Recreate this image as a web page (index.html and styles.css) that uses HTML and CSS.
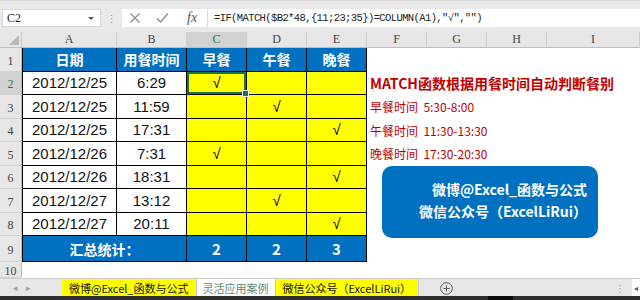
FILE: index.html
```html
<!DOCTYPE html>
<html lang="zh-CN">
<head>
  <meta charset="UTF-8">
  <meta name="viewport" content="width=device-width, initial-scale=1.0">
  <title>MATCH函数根据用餐时间自动判断餐别</title>
  <link rel="stylesheet" href="styles.css">
</head>
<body>
  <div class="app">
    <div class="formula-bar">
      <div class="name-box">C2<span class="arrow"></span></div>
      <div class="grip">⋮</div>
      <div class="formula-input">
        <div class="fx-buttons">
          <svg width="12" height="12" viewBox="0 0 12 12"><path d="M1.5 1.5 L10.5 10.5 M10.5 1.5 L1.5 10.5" stroke="#8a8a8a" stroke-width="1.2" fill="none"/></svg>
          <svg width="13" height="12" viewBox="0 0 13 12"><path d="M1 6.5 L4.5 10 L12 1.5" stroke="#8a8a8a" stroke-width="1.3" fill="none"/></svg>
          <span class="fx">fx</span>
        </div>
        <div class="formula-text">=IF(MATCH($B2*48,{11;23;35})=COLUMN(A1),"√","")</div>
      </div>
    </div>

    <div class="sheet">
      <div class="grid">
        <!-- column headers -->
        <div class="corner"><span class="corner-mark"></span></div>
        <div class="col-head">A</div>
        <div class="col-head">B</div>
        <div class="col-head selected">C</div>
        <div class="col-head">D</div>
        <div class="col-head">E</div>
        <div class="col-head">F</div>
        <div class="col-head">G</div>
        <div class="col-head">H</div>
        <div class="col-head">I</div>

        <!-- row 1 -->
        <div class="row-head">1</div>
        <div class="cell head first">日期</div>
        <div class="cell head">用餐时间</div>
        <div class="cell head">早餐</div>
        <div class="cell head">午餐</div>
        <div class="cell head">晚餐</div>
        <div class="rest"></div>

        <!-- row 2 -->
        <div class="row-head selected">2</div>
        <div class="cell first">2012/12/25</div>
        <div class="cell">6:29</div>
        <div class="cell mark active">√<span class="handle"></span></div>
        <div class="cell mark"></div>
        <div class="cell mark"></div>
        <div class="rest"><span class="note-title">MATCH函数根据用餐时间自动判断餐别</span></div>

        <!-- row 3 -->
        <div class="row-head">3</div>
        <div class="cell first">2012/12/25</div>
        <div class="cell">11:59</div>
        <div class="cell mark"></div>
        <div class="cell mark">√</div>
        <div class="cell mark"></div>
        <div class="rest"><span class="note">早餐时间  5:30-8:00</span></div>

        <!-- row 4 -->
        <div class="row-head">4</div>
        <div class="cell first">2012/12/25</div>
        <div class="cell">17:31</div>
        <div class="cell mark"></div>
        <div class="cell mark"></div>
        <div class="cell mark">√</div>
        <div class="rest"><span class="note">午餐时间  11:30-13:30</span></div>

        <!-- row 5 -->
        <div class="row-head">5</div>
        <div class="cell first">2012/12/26</div>
        <div class="cell">7:31</div>
        <div class="cell mark">√</div>
        <div class="cell mark"></div>
        <div class="cell mark"></div>
        <div class="rest"><span class="note">晚餐时间  17:30-20:30</span></div>

        <!-- row 6 -->
        <div class="row-head">6</div>
        <div class="cell first">2012/12/26</div>
        <div class="cell">18:31</div>
        <div class="cell mark"></div>
        <div class="cell mark"></div>
        <div class="cell mark">√</div>
        <div class="rest"></div>

        <!-- row 7 -->
        <div class="row-head">7</div>
        <div class="cell first">2012/12/27</div>
        <div class="cell">13:12</div>
        <div class="cell mark"></div>
        <div class="cell mark">√</div>
        <div class="cell mark"></div>
        <div class="rest"></div>

        <!-- row 8 -->
        <div class="row-head">8</div>
        <div class="cell first">2012/12/27</div>
        <div class="cell">20:11</div>
        <div class="cell mark"></div>
        <div class="cell mark"></div>
        <div class="cell mark">√</div>
        <div class="rest"></div>

        <!-- row 9 -->
        <div class="row-head">9</div>
        <div class="cell head first merged">汇总统计：</div>
        <div class="cell head total">2</div>
        <div class="cell head total">2</div>
        <div class="cell head total">3</div>
        <div class="rest"></div>

        <!-- row 10 -->
        <div class="row-head">10</div>
        <div class="rest wide"></div>
      </div>

      <div class="promo">
        <div>微博@Excel_函数与公式</div>
        <div>微信公众号（ExcelLiRui）</div>
      </div>
    </div>

    <div class="tabs">
      <div class="tab-nav"><span>◂</span><span>▸</span></div>
      <div class="tab yellow">微博@Excel_函数与公式</div>
      <div class="tab active">灵活应用案例</div>
      <div class="tab yellow">微信公众号（ExcelLiRui）</div>
      <svg class="add-sheet" width="13" height="13" viewBox="0 0 13 13">
        <circle cx="6.5" cy="6.5" r="5.8" stroke="#5a5a5a" stroke-width="1" fill="none"/>
        <path d="M6.5 3.5 V9.5 M3.5 6.5 H9.5" stroke="#5a5a5a" stroke-width="1"/>
      </svg>
      <div class="tabs-right"><span class="grip-small">⋮</span><span class="scroll-left">◂</span></div>
    </div>
    <div class="status"><span class="status-thumb"></span></div>
  </div>
</body>
</html>
```

FILE: styles.css
```css
body {
  margin: 0;
  font-family: "Noto Sans CJK SC", sans-serif;
  background-color: #fff;
}
.app {
  width: 640px;
  height: 300px;
  overflow: hidden;
  display: flex;
  flex-direction: column;
}

/* formula bar */
.formula-bar {
  height: 32px;
  flex: none;
  box-sizing: border-box;
  padding: 8px 0 0 2px;
  display: flex;
  align-items: flex-start;
  background-color: #e9e9e9;
  border-top: 1px solid #d8d8d8;
}
.name-box {
  width: 99px;
  height: 18px;
  box-sizing: border-box;
  padding: 0 6px 0 4px;
  display: flex;
  align-items: center;
  justify-content: space-between;
  background-color: #fff;
  border: 1px solid #dadada;
  font: 12px "Liberation Serif", serif;
  color: #222;
}
.arrow {
  width: 0;
  height: 0;
  border-left: 3px solid transparent;
  border-right: 3px solid transparent;
  border-top: 3px solid #555;
}
.grip {
  width: 21px;
  text-align: center;
  line-height: 18px;
  font-size: 11px;
  color: #9a9a9a;
}
.formula-input {
  flex: 1;
  height: 18px;
  display: flex;
  align-items: center;
  background-color: #fff;
}
.fx-buttons {
  width: 86px;
  height: 100%;
  box-sizing: border-box;
  padding-left: 7px;
  display: flex;
  align-items: center;
  gap: 15px;
  border-right: 1px solid #dadada;
}
.fx {
  font: italic 14px "Liberation Serif", serif;
  color: #555;
  margin-left: 3px;
}
.formula-text {
  padding-left: 6px;
  white-space: pre;
  font: 10.5px "Liberation Mono", monospace;
  letter-spacing: -0.6px;
  color: #222;
}

/* sheet */
.sheet {
  position: relative;
  height: 246px;
  flex: none;
  overflow: hidden;
}
.grid {
  display: grid;
  grid-template-columns: 22px 95px 70px 60px 60px 60px 60px 60px 60px 1fr;
  grid-template-rows: 16px repeat(8, 23.5px) 26px 16px;
}
.corner,
.col-head,
.row-head {
  box-sizing: border-box;
  background-color: #e6e6e6;
  color: #444;
  font: 12px "Liberation Serif", serif;
  display: flex;
  align-items: center;
  justify-content: center;
}
.corner {
  position: relative;
  border-right: 1px solid #c8c8c8;
  border-bottom: 1px solid #bdbdbd;
}
.corner-mark {
  position: absolute;
  right: 2px;
  bottom: 2px;
  width: 0;
  height: 0;
  border-left: 10px solid transparent;
  border-bottom: 10px solid #b8b8b8;
}
.col-head {
  border-right: 1px solid #cfcfcf;
  border-bottom: 1px solid #bdbdbd;
}
.row-head {
  border-right: 1px solid #bdbdbd;
  border-bottom: 1px solid #d4d4d4;
  padding-top: 4px;
}
.col-head.selected,
.row-head.selected {
  background-color: #d2d2d2;
  color: #217346;
}
.cell {
  box-sizing: border-box;
  border-right: 1px solid #000;
  border-bottom: 1px solid #000;
  display: flex;
  align-items: center;
  justify-content: center;
  font: 15px "Liberation Sans", sans-serif;
  color: #111;
  white-space: nowrap;
}
.cell.first {
  border-left: 1px solid #000;
}
.cell.head {
  background-color: #0070c0;
  color: #fff;
  font: bold 14px "Noto Sans CJK SC", sans-serif;
}
.cell.merged {
  grid-column: span 2;
}
.cell.total {
  font: bold 15px "Noto Sans CJK SC", sans-serif;
}
.cell.mark {
  background-color: #ffff00;
  font: 15px "Liberation Sans", sans-serif;
  color: #000;
}
.cell.active {
  position: relative;
  box-shadow: inset 0 0 0 2px #217346;
}
.handle {
  position: absolute;
  right: -3px;
  bottom: -3px;
  width: 5px;
  height: 5px;
  background-color: #217346;
  border: 1px solid #fff;
}
.rest {
  grid-column: span 4;
  padding-left: 3px;
  display: flex;
  align-items: center;
  white-space: pre;
  color: #c00000;
}
.rest.wide {
  grid-column: span 9;
}
.note-title {
  font-size: 14px;
  font-weight: bold;
}
.note {
  font-size: 12px;
}

/* floating text box over F6:I8 */
.promo {
  position: absolute;
  left: 382px;
  top: 134px;
  width: 216px;
  height: 72px;
  box-sizing: border-box;
  padding: 0 11px 4px 0;
  border-radius: 10px;
  background-color: #0070c0;
  color: #fff;
  font-size: 14px;
  font-weight: bold;
  line-height: 22px;
  text-align: right;
  display: flex;
  flex-direction: column;
  justify-content: center;
}

/* sheet tabs */
.tabs {
  height: 18px;
  flex: none;
  box-sizing: border-box;
  display: flex;
  align-items: stretch;
  background-color: #e6e6e6;
  border-top: 1px solid #cdcdcd;
  font-size: 11px;
}
.tab-nav {
  width: 62px;
  box-sizing: border-box;
  padding-left: 13px;
  display: flex;
  align-items: center;
  gap: 8px;
  color: #a0a0a0;
  font-size: 9px;
}
.tab {
  padding: 0 7px;
  display: flex;
  align-items: center;
  color: #111;
  border-right: 1px solid #c8c8c8;
}
.tab.yellow {
  background-color: #ffff00;
}
.tab.active {
  background-color: #fff;
  color: #5f8a71;
  padding: 0 6px;
}
.add-sheet {
  margin: 1px 0 0 21px;
  align-self: center;
}
.tabs-right {
  margin-left: auto;
  display: flex;
  align-items: center;
  gap: 7px;
  color: #999;
}
.grip-small {
  font-size: 10px;
}
.scroll-left {
  width: 8px;
  height: 100%;
  display: flex;
  align-items: center;
  justify-content: center;
  background-color: #fff;
  font-size: 8px;
  color: #555;
}
.status {
  flex: 1;
  position: relative;
  background-color: #2e2e2e;
}
.status-thumb {
  position: absolute;
  left: 488px;
  top: 0;
  width: 25px;
  height: 100%;
  background-color: #0c0c0c;
}
```
